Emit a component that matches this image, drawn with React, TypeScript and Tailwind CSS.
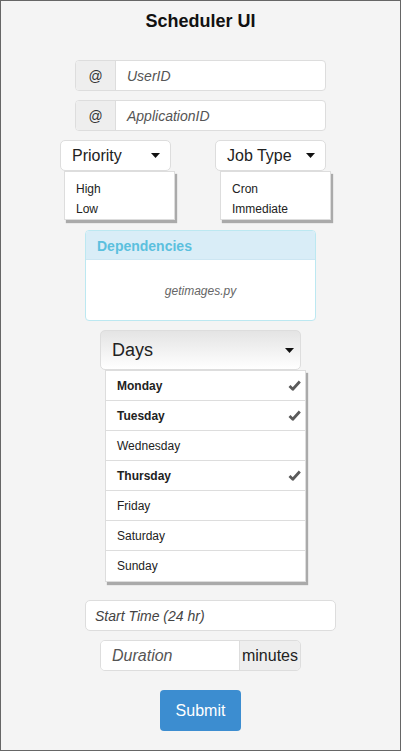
import React from "react";

const font = { fontFamily: '"Liberation Sans", Arial, sans-serif' };

function Caret() {
  return (
    <svg width="9" height="5" viewBox="0 0 9 5" className="shrink-0">
      <path d="M0 0 H9 L4.5 5 Z" fill="#111" />
    </svg>
  );
}

function Check() {
  return (
    <svg width="13" height="11" viewBox="0 0 13 11">
      <path d="M1.5 6 L4.8 9.2 L11.8 1.5" fill="none" stroke="#5a5a5a" strokeWidth="2.8" strokeLinejoin="round" />
    </svg>
  );
}

function AtInput({ placeholder }: { placeholder: string }) {
  return (
    <div className="flex w-[251px] h-[31px] border border-[#dddddd] rounded-[4px] bg-white overflow-hidden">
      <div className="w-[40px] shrink-0 flex items-center justify-center pt-[2px] bg-[#eeeeee] border-r border-[#dddddd] text-[14px] text-[#333]">
        @
      </div>
      <div className="flex items-center pt-[2px] pl-[11px] text-[14px] italic text-[#555]">{placeholder}</div>
    </div>
  );
}

function Dropdown({ label, items, gap }: { label: string; items: string[]; gap: string }) {
  return (
    <div className="flex flex-col w-[111px]">
      <div className="flex items-center justify-between h-[31px] bg-white border border-[#dddddd] rounded-[5px] pl-[11px] pr-[10px] text-[16px] text-[#222]">
        <span>{label}</span>
        <Caret />
      </div>
      <div
        className={`${gap} w-[111px] h-[49px] bg-white border border-[#dddddd] shadow-[2px_3px_1px_#aaaaaa] pt-[7px] pl-[11px] text-[12px] leading-[20px] text-[#222]`}
      >
        {items.map((i) => (
          <div key={i}>{i}</div>
        ))}
      </div>
    </div>
  );
}

const days = [
  { name: "Monday", on: true },
  { name: "Tuesday", on: true },
  { name: "Wednesday", on: false },
  { name: "Thursday", on: true },
  { name: "Friday", on: false },
  { name: "Saturday", on: false },
  { name: "Sunday", on: false },
];

export default function App() {
  return (
    <div style={font} className="w-[401px] h-[751px] border border-[#666666] bg-[#f4f4f4] flex flex-col items-center text-[#111]">
      <div className="mt-[8px] h-[24px] leading-[24px] text-[18px] font-bold">Scheduler UI</div>

      <div className="mt-[27px]">
        <AtInput placeholder="UserID" />
      </div>
      <div className="mt-[9px]">
        <AtInput placeholder="ApplicationID" />
      </div>

      <div className="mt-[9px] self-start ml-[59px] flex gap-[44px] h-[82px]">
        <Dropdown label="Priority" items={["High", "Low"]} gap="ml-[4px]" />
        <Dropdown label="Job Type" items={["Cron", "Immediate"]} gap="ml-[5px]" />
      </div>

      <div className="mt-[8px] w-[231px] h-[91px] border border-[#bce8f1] rounded-[4px] bg-white overflow-hidden flex flex-col">
        <div className="h-[29px] shrink-0 bg-[#d9edf7] border-b border-[#cde6f2] flex items-center pt-[2px] pl-[11px] text-[14px] font-bold text-[#5bc0de]">
          Dependencies
        </div>
        <div className="flex-1 flex items-center justify-center pt-[2px] text-[12px] italic text-[#666]">getimages.py</div>
      </div>

      <div className="mt-[9px] w-[201px] flex flex-col">
        <div className="h-[40px] border border-[#dddddd] rounded-[5px] bg-gradient-to-b from-[#e4e4e4] to-white flex items-center justify-between pt-[1px] pl-[11px] pr-[6px] text-[18px] text-[#222]">
          <span>Days</span>
          <Caret />
        </div>
        <div className="ml-[5px] w-[201px] bg-white border border-[#dddddd] shadow-[2px_3px_1px_#aaaaaa]">
          {days.map((d, i) => (
            <div
              key={d.name}
              className={`h-[30px] flex items-center justify-between pl-[11px] pr-[4px] text-[12px] text-[#222] ${
                i < days.length - 1 ? "border-b border-[#dddddd]" : ""
              } ${d.on ? "font-bold" : ""}`}
            >
              <span>{d.name}</span>
              {d.on && <Check />}
            </div>
          ))}
        </div>
      </div>

      <div className="mt-[18px] self-start ml-[84px] w-[251px] h-[31px] bg-white border border-[#dddddd] rounded-[5px] flex items-center pt-[2px] pl-[9px] text-[14px] italic text-[#444]">
        Start Time (24 hr)
      </div>

      <div className="mt-[9px] w-[201px] h-[31px] flex border border-[#dddddd] rounded-[5px] overflow-hidden">
        <div className="flex-1 bg-white flex items-center pt-[1px] pl-[11px] text-[16px] italic text-[#555]">Duration</div>
        <div className="w-[61px] shrink-0 bg-[#eeeeee] border-l border-[#dddddd] flex items-center justify-center pt-[1px] text-[16px] text-[#222]">
          minutes
        </div>
      </div>

      <div className="mt-[19px] w-[81px] h-[41px] rounded-[4px] bg-[#3c8dd0] text-white text-[16px] flex items-center justify-center">
        Submit
      </div>
    </div>
  );
}
